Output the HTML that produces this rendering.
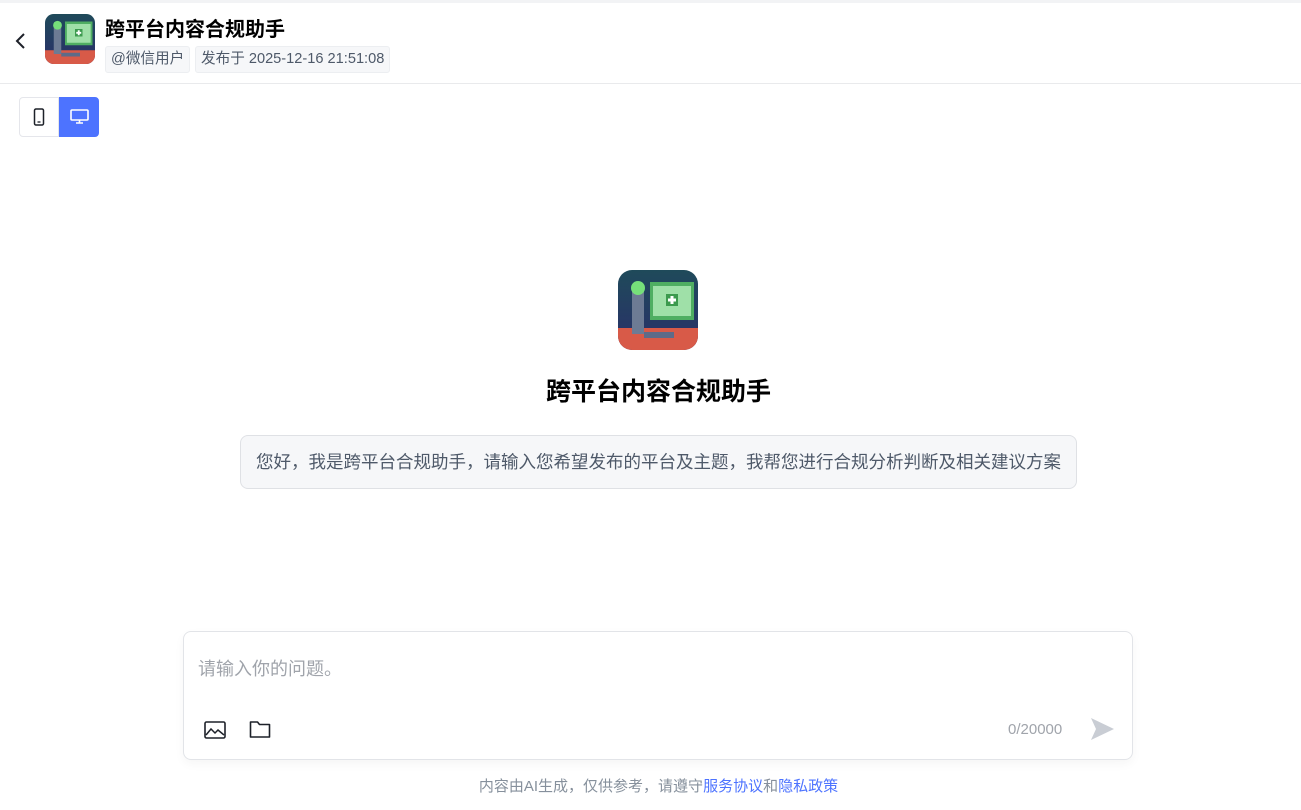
<!DOCTYPE html>
<html><head><meta charset="utf-8"><style>
*{margin:0;padding:0;box-sizing:border-box}
body{width:1301px;height:810px;background:#fff;font-family:"Liberation Sans","Noto Sans CJK SC",sans-serif;position:relative;overflow:hidden;color:#1d2129}
.hdr{position:absolute;left:0;top:0;width:1301px;height:84px;border-bottom:1px solid #e9eaec;border-top:3px solid #f2f3f5}
.tag{position:absolute;top:43px;height:27px;line-height:25px;font-size:14.6px;color:#4e5969;background:#f6f7f9;border:1px solid #eceef1;border-radius:3px;padding:0 5px}
.sw{position:absolute;top:97px;height:40px;width:40px;border:1px solid #e5e6eb}
.box{position:absolute;left:183px;top:631px;width:950px;height:129px;border:1px solid #e2e4e8;border-radius:8px;box-shadow:0 4px 10px rgba(0,0,0,.04)}
</style></head><body>
<div class="hdr">
<svg style="position:absolute;left:14px;top:28px" width="14" height="20" viewBox="0 0 14 20"><path d="M10 3L3 10l7 7" stroke="#1d2129" stroke-width="2" fill="none"/></svg>
<svg style="position:absolute;left:45px;top:11px" width="50" height="50" viewBox="0 0 80 80"><defs><linearGradient id="g" x1="0" y1="0" x2="0" y2="1"><stop offset="0" stop-color="#1f4a5a"/><stop offset="1" stop-color="#2a2f6a"/></linearGradient><clipPath id="c"><rect width="80" height="80" rx="14"/></clipPath></defs><g clip-path="url(#c)"><rect width="80" height="80" fill="url(#g)"/><rect x="0" y="58" width="80" height="22" fill="#d85a48"/><rect x="32" y="12" width="44" height="38" fill="#4fae62"/><rect x="35" y="16" width="38" height="30" fill="#9fe0a8"/><rect x="48" y="24" width="12" height="12" fill="#3c9a4e"/><path d="M54 26v8M50 30h8" stroke="#fff" stroke-width="3"/><rect x="14" y="20" width="12" height="44" fill="#6d7b94"/><circle cx="20" cy="18" r="7" fill="#76e07a"/><rect x="26" y="62" width="30" height="6" fill="#5e6b88"/></g></svg>
<div style="position:absolute;left:105px;top:10px;font-size:20px;font-weight:bold;color:#000">跨平台内容合规助手</div>
<div class="tag" style="left:105px">@微信用户</div>
<div class="tag" style="left:195px">发布于 2025-12-16 21:51:08</div>
</div>
<div class="sw" style="left:19px;border-radius:4px 0 0 4px"><svg style="position:absolute;left:13px;top:10px" width="12" height="18" viewBox="0 0 12 18"><rect x="1.5" y="1" width="9" height="16" rx="1.5" stroke="#1d2129" stroke-width="1.5" fill="none"/><path d="M4.5 14h3" stroke="#1d2129" stroke-width="1.3"/></svg></div>
<div class="sw" style="left:59px;background:#4d73ff;border-color:#4d73ff;border-radius:0 4px 4px 0"><svg style="position:absolute;left:10px;top:11px" width="19" height="16" viewBox="0 0 19 16"><rect x="1" y="1" width="17" height="10" rx="1" stroke="#fff" stroke-width="1.6" fill="none"/><path d="M6 14h7M9.5 11v3" stroke="#fff" stroke-width="1.6"/></svg></div>
<svg style="position:absolute;left:618px;top:270px" width="80" height="80" viewBox="0 0 80 80"><g clip-path="url(#c)"><rect width="80" height="80" fill="url(#g)"/><rect x="0" y="58" width="80" height="22" fill="#d85a48"/><rect x="32" y="12" width="44" height="38" fill="#4fae62"/><rect x="35" y="16" width="38" height="30" fill="#9fe0a8"/><rect x="48" y="24" width="12" height="12" fill="#3c9a4e"/><path d="M54 26v8M50 30h8" stroke="#fff" stroke-width="3"/><rect x="14" y="20" width="12" height="44" fill="#6d7b94"/><circle cx="20" cy="18" r="7" fill="#76e07a"/><rect x="26" y="62" width="30" height="6" fill="#5e6b88"/></g></svg>
<div style="position:absolute;left:0;width:1317px;top:372px;text-align:center;font-size:25px;font-weight:bold;color:#000">跨平台内容合规助手</div>
<div style="position:absolute;left:240px;top:435px;width:837px;height:54px;background:#f6f7f9;border:1px solid #dfe1e5;border-radius:8px;font-size:17.5px;line-height:52px;text-align:center;color:#4e5969;white-space:nowrap">您好，我是跨平台合规助手，请输入您希望发布的平台及主题，我帮您进行合规分析判断及相关建议方案</div>
<div class="box">
<div style="position:absolute;left:14px;top:23px;font-size:18px;color:#a0a4ab">请输入你的问题。</div>
<svg style="position:absolute;left:20px;top:88px" width="22" height="20" viewBox="0 0 22 20"><rect x="1" y="2" width="20" height="16" rx="1.5" stroke="#1d2129" stroke-width="1.6" fill="none"/><path d="M2 15l5-6 4 4 3-3 6 5" stroke="#1d2129" stroke-width="1.5" fill="none"/></svg>
<svg style="position:absolute;left:65px;top:87px" width="22" height="20" viewBox="0 0 22 20"><path d="M1.5 3h7l2 2.5h10v12.5h-19z" stroke="#1d2129" stroke-width="1.6" fill="none" stroke-linejoin="round"/></svg>
<div style="position:absolute;left:824px;top:89px;font-size:15px;color:#a0a4ab">0/20000</div>
<svg style="position:absolute;left:905px;top:84px" width="26" height="26" viewBox="0 0 26 26"><path d="M2 2l23 11L2 24l5-11z" fill="#c9cdd4"/></svg>
</div>
<div style="position:absolute;left:0;width:1317px;top:775px;text-align:center;font-size:15px;color:#86909c">内容由AI生成，仅供参考，请遵守<span style="color:#4d73ff">服务协议</span>和<span style="color:#4d73ff">隐私政策</span></div>
</body></html>
